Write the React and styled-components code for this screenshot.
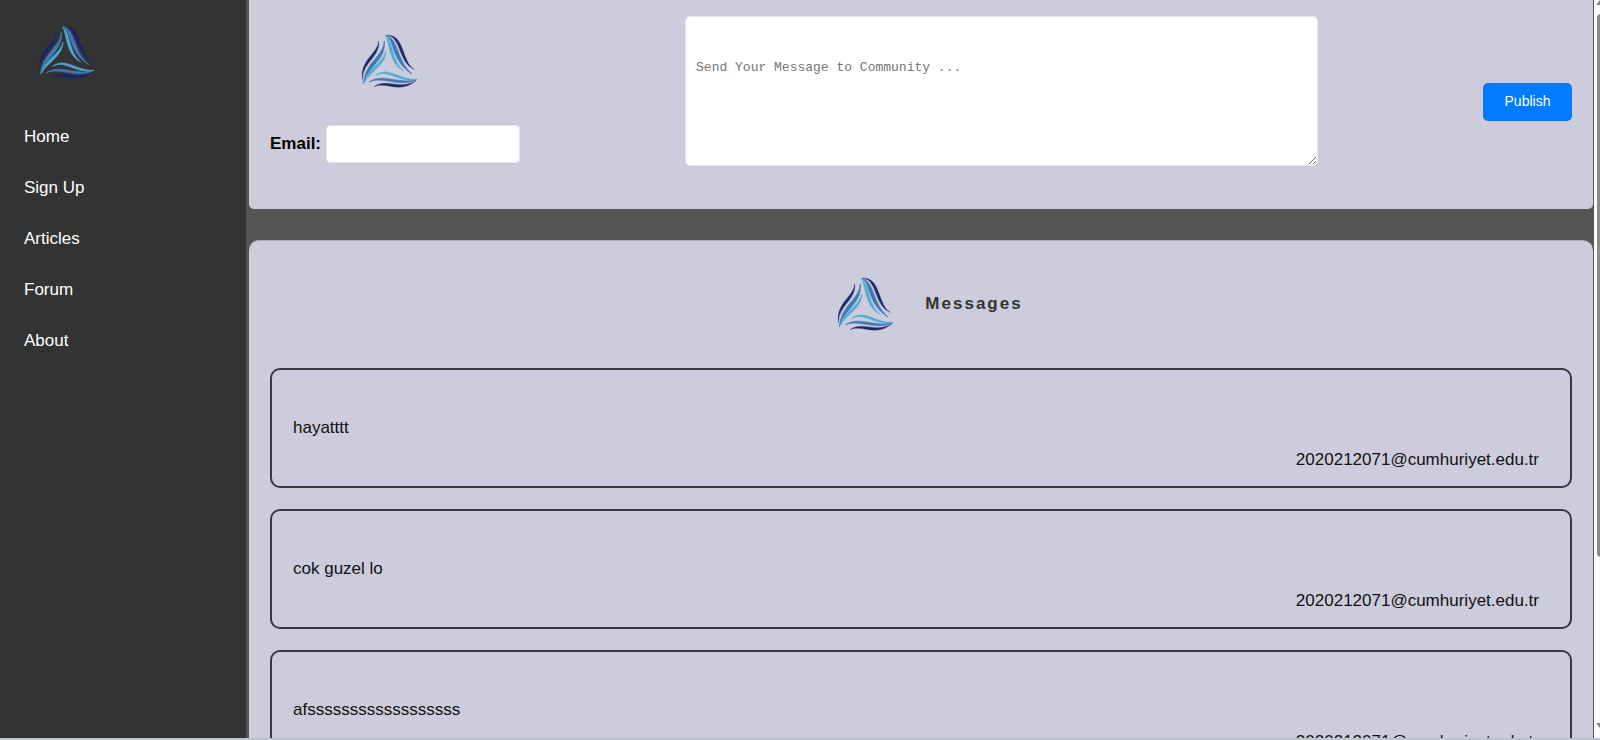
import React from "react";
import styled, { createGlobalStyle } from "styled-components";

const GlobalStyle = createGlobalStyle`
  *, *::before, *::after { box-sizing: border-box; }
  body {
    margin: 0;
    background: #555;
    color: #111;
    font: 17px/20px Arial, "Liberation Sans", sans-serif;
  }
`;

const Page = styled.div`
  height: 100vh;
  display: flex;
  flex-direction: column;
  overflow: hidden;
`;

const Columns = styled.div`
  flex: 1;
  min-height: 0;
  display: flex;
`;

const BottomEdge = styled.div`
  height: 2px;
  background: #b4c8d0;
`;

const Sidebar = styled.aside`
  width: 246px;
  flex-shrink: 0;
  padding: 22px 24px;
  background: #333;
`;

const Brand = styled.div`
  padding-left: 12px;
`;

const Menu = styled.ul`
  list-style: none;
  margin: 45px 0 0;
  padding: 0;
  display: flex;
  flex-direction: column;
  gap: 31px;
`;

const MenuLink = styled.a`
  display: block;
  color: #fff;
  text-decoration: none;
`;

const Main = styled.main`
  flex: 1;
  min-width: 0;
  padding: 0 1px 0 3px;
  overflow: hidden;
  display: flex;
  flex-direction: column;
  gap: 31px;
`;

const Composer = styled.form`
  flex-shrink: 0;
  display: flex;
  align-items: center;
  gap: clamp(20px, 11vw, 165px);
  padding: 16px 21px 21px;
  background: #cdccdc;
  border-radius: 0 0 5px 5px;
`;

const Sender = styled.div`
  min-height: 172px;
  padding-top: 15px;
  display: flex;
  flex-direction: column;
  align-items: center;
  gap: 34px;
`;

const SenderLogo = styled.div`
  padding-right: 12px;
`;

const Field = styled.div`
  display: flex;
  align-items: center;
  gap: 5px;
`;

const FieldLabel = styled.label`
  color: #000;
  font-weight: bold;
`;

const EmailInput = styled.input`
  width: 194px;
  height: 38px;
  padding: 10px;
  border: 1px solid #e6e6ee;
  border-radius: 4px;
  background: #fff;
  font: inherit;
`;

const MessageBox = styled.textarea`
  flex: 1;
  min-width: 0;
  height: 150px;
  align-self: flex-start;
  padding: 43px 10px 10px;
  border: 1px solid #e6e6ee;
  border-radius: 5px;
  background: #fff;
  font: 13px/16px Consolas, "Liberation Mono", monospace;
  &::placeholder { color: #757575; }
`;

const PublishButton = styled.button`
  width: 89px;
  height: 38px;
  padding: 0 0 2px;
  border: 0;
  border-radius: 5px;
  background: #007bff;
  color: #fff;
  font: 14px/16px Arial, "Liberation Sans", sans-serif;
  cursor: pointer;
`;

const Board = styled.section`
  flex-shrink: 0;
  padding: 33px 21px 21px;
  background: #cdccdc;
  border-top: 1px solid #aaa9b6;
  border-radius: 10px;
`;

const BoardHeader = styled.header`
  display: flex;
  align-items: center;
  justify-content: center;
  gap: 30px;
  padding-left: 16px;
  margin-bottom: 34px;
`;

const BoardTitle = styled.h2`
  margin: 0;
  color: #333;
  font-size: 17px;
  letter-spacing: 2px;
`;

const MessageList = styled.div`
  display: flex;
  flex-direction: column;
  gap: 21px;
`;

const MessageCard = styled.article`
  padding: 48px 31px 16px 21px;
  border: 2px solid #38383e;
  border-radius: 10px;
  display: flex;
  flex-direction: column;
  gap: 12px;
`;

const MessageLine = styled.p`
  margin: 0;
  text-align: ${(p) => (p.$author ? "right" : "left")};
`;

const ScrollRail = styled.div`
  width: 6px;
  padding-left: 2px;
  background: #fcfcfc;
  display: flex;
  flex-direction: column;
  justify-content: space-between;
  overflow: hidden;
`;

const ScrollThumb = styled.div`
  width: 8px;
  flex: 0 0 543px;
  margin: 9px 0 auto 1px;
  border-radius: 4px;
  background: #8b8b8b;
`;

const Arrow = styled.svg`
  flex-shrink: 0;
  display: block;
  width: 9px;
  height: 5px;
  fill: #858585;
  margin-bottom: ${(p) => (p.$down ? "10px" : "0")};
`;

const LogoSvg = styled.svg`
  display: block;
  width: 60px;
  height: 60px;
`;

function Logo({ muted }) {
  const dark = muted ? "#1b2468" : "#1c2a66";
  const mid = muted ? "#3e78b8" : "#4279b4";
  const light = muted ? "#4ea8d4" : "#4dacd9";
  return (
    <LogoSvg viewBox="57 32 180 180" role="img" aria-label="Community logo">
      <g fill={dark} stroke={dark}>
        <path d="M116 62C114 101 60 116 67 178C68 124 122 109 116 62Z" />
        <path d="M137 45C195 37 183 123 223 147C173 128 185 43 137 45Z" />
        <path d="M102 199C140 172 180 212 229 180C180 223 140 182 102 199Z" />
      </g>
      <g fill={mid} stroke={mid} strokeWidth="2">
        <path d="M133 62C130 110 75 125 70 190C85 135 139 120 133 62Z" />
        <path d="M138 45C178 58 167 118 216 161C153 122 166 62 138 45Z" />
        <path d="M87 185C130 155 178 195 231 177C178 205 130 165 87 185Z" />
      </g>
      <g fill={light} stroke={light} strokeWidth="2">
        <path d="M138 92C131 127 82 146 74 185C90 154 138 134 138 92Z" />
        <path d="M137 47C160 63 155 123 191 152C145 127 150 67 137 47Z" />
        <path d="M107 165C145 136 178 180 230 177C178 189 145 144 107 165Z" />
      </g>
    </LogoSvg>
  );
}

const links = ["Home", "Sign Up", "Articles", "Forum", "About"];

const messages = [
  { text: "hayatttt", author: "2020212071@cumhuriyet.edu.tr" },
  { text: "cok guzel lo", author: "2020212071@cumhuriyet.edu.tr" },
  { text: "afssssssssssssssssss", author: "2020212071@cumhuriyet.edu.tr" },
];

export default function App() {
  return (
    <Page>
      <GlobalStyle />
      <Columns>
        <Sidebar>
          <Brand>
            <Logo muted />
          </Brand>
          <nav>
            <Menu>
              {links.map((name) => (
                <li key={name}>
                  <MenuLink href="#">{name}</MenuLink>
                </li>
              ))}
            </Menu>
          </nav>
        </Sidebar>
        <Main>
          <Composer onSubmit={(e) => e.preventDefault()}>
            <Sender>
              <SenderLogo>
                <Logo />
              </SenderLogo>
              <Field>
                <FieldLabel htmlFor="email">Email:</FieldLabel>
                <EmailInput id="email" type="email" />
              </Field>
            </Sender>
            <MessageBox
              aria-label="Message"
              placeholder="Send Your Message to Community ..."
            />
            <PublishButton type="submit">Publish</PublishButton>
          </Composer>
          <Board>
            <BoardHeader>
              <Logo />
              <BoardTitle>Messages</BoardTitle>
            </BoardHeader>
            <MessageList>
              {messages.map((m) => (
                <MessageCard key={m.text}>
                  <MessageLine>{m.text}</MessageLine>
                  <MessageLine $author>{m.author}</MessageLine>
                </MessageCard>
              ))}
            </MessageList>
          </Board>
        </Main>
        <ScrollRail aria-hidden="true">
          <Arrow viewBox="0 0 9 5">
            <path d="M4 0h1l4 5H0z" />
          </Arrow>
          <ScrollThumb />
          <Arrow $down viewBox="0 0 9 5">
            <path d="M0 0h9L5 5H4z" />
          </Arrow>
        </ScrollRail>
      </Columns>
      <BottomEdge />
    </Page>
  );
}
